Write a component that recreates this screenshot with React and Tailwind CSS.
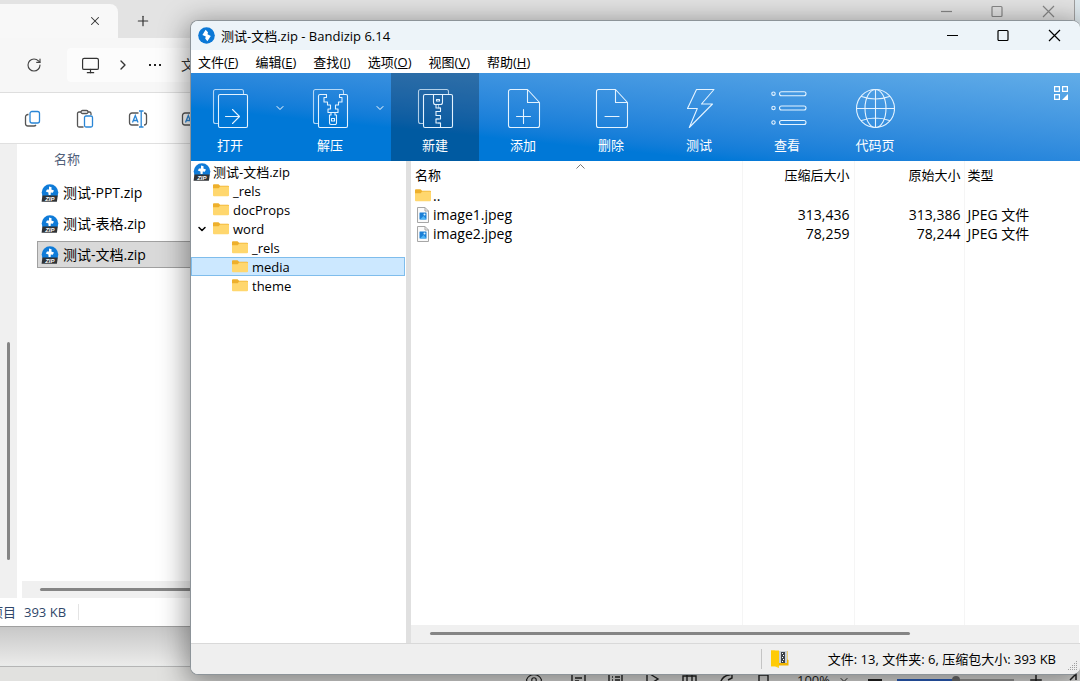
import React from 'react';
import { ChevronDown, ChevronRight, RotateCw, Monitor, Eye, X, Plus } from 'lucide-react';

const menus = [
    { label: '文件', key: 'F' },
    { label: '编辑', key: 'E' },
    { label: '查找', key: 'I' },
    { label: '选项', key: 'O' },
    { label: '视图', key: 'V' },
    { label: '帮助', key: 'H' },
];

const tree = [
    { name: '_rels', pad: 'pl-[21px]' },
    { name: 'docProps', pad: 'pl-[21px]' },
    { name: 'word', pad: 'pl-1', open: true },
    { name: '_rels', pad: 'pl-10' },
    { name: 'media', pad: 'pl-10', selected: true },
    { name: 'theme', pad: 'pl-10' },
];

const images = [
    { name: 'image1.jpeg', packed: '313,436', size: '313,386', type: 'JPEG 文件' },
    { name: 'image2.jpeg', packed: '78,259', size: '78,244', type: 'JPEG 文件' },
];

const archives = ['测试-PPT.zip', '测试-表格.zip', '测试-文档.zip'];

function ZipIcon() {
    return (
        <svg viewBox="0 0 18 18" className="w-[18px] h-[18px] shrink-0">
            <circle cx="9" cy="8.5" r="8.3" fill="#0f7bd8" />
            <path d="M8 2.400 10.600 3.200 10.400 5.400 13 6.600 11.800 8.800 9.800 8.400 9.600 11H7.600L7.400 8.600 4.800 7.600 6 5.400 8 5.600Z" fill="#fff" />
            <path d="M1.400 11.500h15.400l-.9 6.200H.6Z" fill="#2f3337" />
            <text x="8.8" y="16.6" textAnchor="middle" fontSize="6" fontWeight="700" fontStyle="italic" fill="#fff" fontFamily="Liberation Sans, sans-serif">ZIP</text>
        </svg>
    );
}

function FolderIcon() {
    return (
        <svg viewBox="0 0 16 13" className="w-4 h-[13px] shrink-0">
            <path d="M0 1.2Q0 .3.9.3h4.6l1.6 1.5h8q.9 0 .9.9V5H0Z" fill="#eeb02c" />
            <path d="M0 4.2h5.6L7.2 2.400h8q.8 0 .8.8v8.100q0 1-1 1H1q-1 0-1-1Z" fill="#ffd76e" />
        </svg>
    );
}

function JpegIcon() {
    return (
        <svg viewBox="0 0 14 18" className="w-3.5 h-[18px] shrink-0" fill="none">
            <path d="M1.5 1.5h7.5l3.5 3.5v11.5h-11Z" fill="#fafafa" stroke="#a6a6a6" />
            <path d="M9 1.5V5h3.5" stroke="#a6a6a6" />
            <rect x="3.500" y="6.500" width="7" height="7" rx=".5" fill="#1b7fd6" />
            <path d="m4 13.500 3.500-3.500 3 3.500Z" fill="#4db4f5" />
            <circle cx="8.500" cy="8.500" r="1" fill="#d6f3ff" />
        </svg>
    );
}

function ToolIcon({ children }) {
    return (
        <svg viewBox="0 0 40 42" className="w-10 h-[42px] shrink-0" fill="none" stroke="#e4f3ff" strokeWidth="1.1" strokeLinejoin="round" strokeLinecap="round">
            {children}
        </svg>
    );
}

const backSheet = 'M8.5 35.500H5.500a2 2 0 0 1-2-2v-30a2 2 0 0 1 2-2h26a2 2 0 0 1 2 2v3';
const page = 'M24.500 1.500h-17a2 2 0 0 0-2 2v34a2 2 0 0 0 2 2h27a2 2 0 0 0 2-2v-23Zv13h12';

const icons = {
    open: (
        <ToolIcon>
            <path d={backSheet} opacity=".75" />
            <rect x="8.5" y="6.5" width="29" height="33" rx="1.5" />
            <path d="M15.5 28.500h14M22.500 21.500l7 7-7 7" />
        </ToolIcon>
    ),
    extract: (
        <ToolIcon>
            <path d={backSheet} opacity=".75" />
            <path d="M16.500 6.500H10a1.500 1.500 0 0 0-1.500 1.500v30a1.500 1.500 0 0 0 1.500 1.500h26a1.500 1.500 0 0 0 1.500-1.500V8a1.500 1.500 0 0 0-1.500-1.500h-6.500" />
            <path d="M16.500 6.500v3h-2.500v4.500h3.500v3h3v4h-2.500v3.500h3.500M29.500 6.500v3h2.500v4.500h-3.500v3h-3v4h2.500v3.500h-3.500" />
            <path d="M19.500 27h1.500v-2.500h4V27h1.500v8a1.500 1.500 0 0 1-1.500 1.500h-4a1.500 1.500 0 0 1-1.500-1.500Z" />
            <rect x="21.500" y="30.500" width="3" height="2.500" />
        </ToolIcon>
    ),
    create: (
        <ToolIcon>
            <path d={backSheet} opacity=".75" />
            <rect x="8.5" y="6.5" width="29" height="33" rx="1.5" />
            <path d="M18.500 6.500v8a2 2 0 0 0 2 2h5a2 2 0 0 0 2-2v-8" />
            <rect x="21.500" y="11.500" width="3" height="1.500" />
            <path d="M21 16.500v3.500h4.500v3.500h-4.500v4h4.500v3.500h-4.500v4h4.500v4.500" />
            <path d="M25.500 20h-2v-3.500M21 23.500h2.500M25.500 27.500h-2M21 31h2.500M25.500 35h-2" opacity=".6" />
        </ToolIcon>
    ),
    add: (
        <ToolIcon>
            <path d={page} />
            <path d="M13.500 28.500h14M20.500 21.500v14" />
        </ToolIcon>
    ),
    remove: (
        <ToolIcon>
            <path d={page} />
            <path d="M14 28.500h14" />
        </ToolIcon>
    ),
    test: (
        <ToolIcon>
            <path d="M17.500 1.500H35L22.500 16h11L10.300 39.500l8-19H8.500Z" />
        </ToolIcon>
    ),
    view: (
        <ToolIcon>
            {[5.7, 20, 34.5].map((y) => (
                <g key={y}>
                    <circle cx="6.500" cy={y} r="1.7" />
                    <rect x="12.500" y={y - 2} width="26.500" height="4" rx="2" />
                </g>
            ))}
        </ToolIcon>
    ),
    codepage: (
        <ToolIcon>
            <circle cx="20.500" cy="20.500" r="19" />
            <ellipse cx="20.500" cy="20.500" rx="10.500" ry="19" />
            <path d="M20.500 1.500v38M1.500 20.500h38M6.500 8.500q14 5 28 0M6.500 32.500q14-5 28 0" />
        </ToolIcon>
    ),
};

const tools = [
    { label: '打开', icon: icons.open, menu: true },
    { label: '解压', icon: icons.extract, menu: true },
    { label: '新建', icon: icons.create, active: true },
    { label: '添加', icon: icons.add },
    { label: '删除', icon: icons.remove },
    { label: '测试', icon: icons.test },
    { label: '查看', icon: icons.view },
    { label: '代码页', icon: icons.codepage },
];

function WindowControls({ className }) {
    const glyphs = [
        { label: '最小化', d: 'M1 6.500h11' },
        { label: '最大化', d: 'M2 1.500h8a1 1 0 0 1 1 1v8a1 1 0 0 1-1 1H2a1 1 0 0 1-1-1v-8a1 1 0 0 1 1-1Z' },
        { label: '关闭', d: 'm1 1 11 11M12 1 1 12' },
    ];
    return (
        <div className={`ml-auto flex ${className}`}>
            {glyphs.map((g) => (
                <button key={g.label} aria-label={g.label} className="w-[51px] flex items-center justify-center">
                    <svg viewBox="0 0 13 13" className="w-[13px] h-[13px]" fill="none" stroke="currentColor" strokeWidth="1.2">
                        <path d={g.d} />
                    </svg>
                </button>
            ))}
        </div>
    );
}

function RenameIcon() {
    return (
        <svg viewBox="0 0 20 20" className="w-5 h-5" fill="none" stroke="#555" strokeWidth="1.3">
            <path d="M10.500 4H4a2.500 2.500 0 0 0-2.500 2.500v7A2.500 2.500 0 0 0 4 16h6.500M16 4a2.500 2.500 0 0 1 2.500 2.500v7A2.500 2.500 0 0 1 16 16" />
            <path d="M11 2h4.500M11 18h4.500M13.200 2v16M4.500 13.500 7.300 6.500l2.700 7M5.500 11.500h3.700" stroke="#2a86d6" />
        </svg>
    );
}

function Explorer() {
    return (
        <section className="absolute left-0 right-[5px] top-0 bottom-[54px] flex flex-col bg-white border-r border-b border-[#a0a0a0] rounded-br-lg overflow-hidden">
            <div className="h-[38px] shrink-0 flex bg-[#e3e3e3]">
                <div className="w-[118px] mt-1 rounded-tr-lg bg-[#f8f8f8] flex items-center justify-end pr-4">
                    <button aria-label="关闭标签页"><X className="w-3.5 h-3.5 text-[#333]" strokeWidth={1.8} /></button>
                </div>
                <button aria-label="新标签页" className="w-[50px] mt-1 flex items-center justify-center">
                    <Plus className="w-4 h-4 text-[#333]" strokeWidth={1.8} />
                </button>
                <WindowControls className="h-[22px] text-[#888]" />
            </div>

            <div className="h-[55px] shrink-0 flex items-center bg-[#f7f7f7] border-b border-[#dedede]">
                <button aria-label="刷新" className="w-[67px] flex justify-center">
                    <RotateCw className="w-4 h-4 text-[#444]" strokeWidth={1.7} />
                </button>
                <div className="flex-1 h-[34px] flex items-center bg-[#fcfcfc] text-[#333] rounded">
                    <span className="w-[46px] flex justify-center"><Monitor className="w-[19px] h-[19px]" strokeWidth={1.5} /></span>
                    <span className="w-5 flex justify-center"><ChevronRight className="w-4 h-4" strokeWidth={2} /></span>
                    <button aria-label="更多" className="w-11 flex justify-center gap-[3px]">
                        <i className="w-0.5 h-0.5 bg-[#222]" />
                        <i className="w-0.5 h-0.5 bg-[#222]" />
                        <i className="w-0.5 h-0.5 bg-[#222]" />
                    </button>
                    <span className="ml-1 text-sm">文</span>
                </div>
            </div>

            <div className="h-[51px] pt-0.5 shrink-0 flex items-center gap-[33px] pl-[22px] border-b border-[#e0e0e0]">
                <button aria-label="复制">
                    <svg viewBox="0 0 20 20" className="w-5 h-5" fill="none" stroke="#555" strokeWidth="1.3">
                        <path d="M6.500 5.500H6a2.500 2.500 0 0 0-2.500 2.500v6.500A2.500 2.500 0 0 0 6 17h6a2.500 2.500 0 0 0 2-1" />
                        <rect x="8" y="2.500" width="9.500" height="11.500" rx="2" stroke="#2a86d6" />
                    </svg>
                </button>
                <button aria-label="粘贴">
                    <svg viewBox="0 0 20 20" className="w-5 h-5" fill="none" stroke="#555" strokeWidth="1.3">
                        <path d="M6 3H4a1.500 1.500 0 0 0-1.500 1.500v12A1.500 1.500 0 0 0 4 18h4.500M13 3h1.500A1.500 1.500 0 0 1 16 4.500V6" />
                        <rect x="6" y="1.500" width="7" height="3" rx="1.500" />
                        <rect x="9.500" y="7" width="8" height="11" rx="1.500" stroke="#2a86d6" />
                    </svg>
                </button>
                <button aria-label="重命名"><RenameIcon /></button>
                <button aria-label="共享"><RenameIcon /></button>
            </div>

            <div className="flex-1 min-h-0 flex">
                <div className="w-[17px] bg-[#f0f0f0] pl-[7px] flex flex-col">
                    <div className="grow-[198]" />
                    <div className="grow-[218] w-[3px] rounded bg-[#858585]" />
                    <div className="grow-[38]" />
                </div>
                <div className="flex-1 ml-[5px] flex flex-col">
                    <div className="pl-8 h-[35px] leading-[30px] text-[#51607a]">名称</div>
                    <ul className="ml-[15px] flex flex-col gap-1 text-sm">
                        {archives.map((name, i) => (
                            <li key={name} className={`h-[27px] pl-[3px] flex items-center gap-1 border ${i === 2 ? 'bg-[#d9d9d9] border-[#a0a0a0]' : 'border-transparent'}`}>
                                <ZipIcon />
                                <span>{name}</span>
                            </li>
                        ))}
                    </ul>
                    <div className="mt-auto h-[17px] pl-[18px] flex items-center bg-[#f0f0f0]">
                        <div className="w-4/5 h-[3px] rounded bg-[#858585]" />
                    </div>
                </div>
            </div>

            <div className="h-7 shrink-0 flex items-center gap-2 text-[#2f4669]">
                <span className="w-4 flex justify-end whitespace-nowrap">项目</span>
                <span>393 KB</span>
                <span className="w-px h-4 ml-1 bg-[#e4e4e4]" />
            </div>
        </section>
    );
}

function Toolbar() {
    return (
        <div className="h-[88px] shrink-0 flex text-white bg-linear-to-tr from-[#0078d7] from-30% to-[#62ade8]">
            {tools.map((t) => (
                <React.Fragment key={t.label}>
                    <button className={`${t.menu ? 'w-[78px]' : 'w-[88px]'} ${t.active ? 'bg-black/25' : ''} pt-[15px] flex flex-col items-center gap-[5px]`}>
                        {t.icon}
                        <span className="leading-5">{t.label}</span>
                    </button>
                    {t.menu && (
                        <button aria-label={`${t.label}选项`} className="w-[22px] h-[70px] flex items-center justify-center">
                            <ChevronDown className="w-3 h-3" strokeWidth={2} />
                        </button>
                    )}
                </React.Fragment>
            ))}
            <button aria-label="布局" className="ml-auto mt-[13px] mr-3 w-3.5 h-3.5">
                <svg viewBox="0 0 14 14" fill="none" stroke="#fff" strokeWidth="1.2">
                    <path d="M.6.6h4.800v4.800H.6ZM8.600.6h4.800v4.800H8.600ZM.6 8.600h4.800v4.800H.6Z" />
                    <path d="M14 8v6H8Z" fill="#fff" stroke="none" />
                </svg>
            </button>
        </div>
    );
}

function FileTable() {
    return (
        <table className="w-full h-full table-fixed border-collapse text-left">
            <colgroup>
                <col />
                <col className="w-[112px]" />
                <col className="w-[110px]" />
                <col className="w-[116px]" />
            </colgroup>
            <thead>
                <tr className="h-[25px]">
                    <th className="relative pt-0.5 font-normal pl-1 border-r border-[#f5f5f5]">
                        名称
                        <svg viewBox="0 0 9 5" className="absolute top-[3px] left-1/2 w-[9px] h-[5px]" fill="none" stroke="#777">
                            <path d="m.5 4.500 4-4 4 4" />
                        </svg>
                    </th>
                    <th className="pt-0.5 font-normal text-right pr-1 border-r border-[#f5f5f5]">压缩后大小</th>
                    <th className="pt-0.5 font-normal text-right pr-[3px] border-r border-[#f5f5f5]">原始大小</th>
                    <th className="pt-0.5 font-normal pl-[3px]">类型</th>
                </tr>
            </thead>
            <tbody className="text-sm">
                <tr className="h-[19px]">
                    <td className="pl-1 border-r border-[#f5f5f5]">
                        <div className="flex items-center gap-0.5"><FolderIcon /><span className="leading-[19px]">..</span></div>
                    </td>
                    <td className="border-r border-[#f5f5f5]" />
                    <td className="border-r border-[#f5f5f5]" />
                    <td />
                </tr>
                {images.map((f) => (
                    <tr key={f.name} className="h-[19px]">
                        <td className="pl-[5px] border-r border-[#f5f5f5]">
                            <div className="flex items-center gap-[3px] leading-[19px]"><JpegIcon /><span>{f.name}</span></div>
                        </td>
                        <td className="text-right pr-1 leading-[19px] border-r border-[#f5f5f5]">{f.packed}</td>
                        <td className="text-right pr-[3px] leading-[19px] border-r border-[#f5f5f5]">{f.size}</td>
                        <td className="pl-[3px] leading-[19px]">{f.type}</td>
                    </tr>
                ))}
                <tr>
                    <td className="border-r border-[#f5f5f5]" />
                    <td className="border-r border-[#f5f5f5]" />
                    <td className="border-r border-[#f5f5f5]" />
                    <td />
                </tr>
            </tbody>
        </table>
    );
}

function Bandizip() {
    return (
        <section className="absolute left-[190px] right-0 top-5 bottom-1.5 flex flex-col bg-white border-l border-t border-b border-[#8d9499] rounded-lg overflow-hidden shadow-[0_6px_28px_4px_rgba(0,0,0,0.4)]">
            <header className="h-[29px] shrink-0 flex items-center bg-[#edf4f9] pl-[7px]">
                <svg viewBox="0 0 17 17" className="w-[17px] h-[17px]">
                    <circle cx="8.500" cy="8.500" r="8.300" fill="#0b78d6" />
                    <path d="M7.600 2.800 4.400 8 7.800 9.600 7.200 11.600 9.400 14.200 12.800 8.900 9.500 7.300 10 5.200Z" fill="#fff" />
                </svg>
                <h1 className="ml-1.5">测试-文档.zip - Bandizip 6.14</h1>
                <WindowControls className="h-full text-black" />
            </header>

            <nav className="h-[23px] shrink-0 flex items-center gap-[17px] pl-[7px]">
                {menus.map((m) => (
                    <button key={m.key}>{m.label}(<u>{m.key}</u>)</button>
                ))}
            </nav>

            <Toolbar />

            <div className="flex-1 min-h-0 flex">
                <aside className="w-[215px] shrink-0 pt-px">
                    <div className="h-[19px] pl-0.5 flex items-center gap-0.5"><ZipIcon /><span>测试-文档.zip</span></div>
                    <ul>
                        {tree.map((n, i) => (
                            <li key={i} className={`h-[19px] flex items-center border ${n.pad} ${n.selected ? 'bg-[#cce8ff] border-[#7fbdec] mr-px' : 'border-transparent'}`}>
                                {n.open && <ChevronDown className="w-3 h-3 mr-[5px]" strokeWidth={3} />}
                                <FolderIcon />
                                <span className="ml-1">{n.name}</span>
                            </li>
                        ))}
                    </ul>
                </aside>
                <div className="w-[5px] bg-[#e0e0e0]" />
                <main className="flex-1 min-w-0 flex flex-col">
                    <div className="flex-1 min-h-0"><FileTable /></div>
                    <div className="h-[18px] mr-px pl-[19px] pb-0.5 flex items-center bg-[#f0f0f0]">
                        <div className="w-[74%] h-[3px] rounded bg-[#858585]" />
                    </div>
                </main>
            </div>

            <footer className="h-[31px] shrink-0 flex items-center justify-end bg-[#efefef] border-t border-[#d9d9d9]">
                <span className="w-px h-5 bg-[#c4c4c4]" />
                <svg viewBox="0 0 20 20" className="ml-2 w-5 h-5">
                    <path d="M9 2h8.500v8.500L18.500 11v5.500H9Z" fill="#f0b400" />
                    <path d="M8 2h9v12H8Z" fill="#c9d0d6" />
                    <path d="M11 3h4v11h-4Z" fill="#3c4248" />
                    <path d="M12 4h1v1h-1ZM13 6h1v1h-1ZM12 8h1v1h-1ZM13 10h1v1h-1ZM12 12h1v1h-1Z" fill="#fff" />
                    <path d="M1 1.500h3.500L9 4v15l-4-1.500H1Z" fill="#ffd21c" />
                    <path d="M1 1.500h8V17H1Z" fill="#ffcb05" />
                </svg>
                <span className="ml-[38px]">文件: 13, 文件夹: 6, 压缩包大小: 393 KB</span>
                <svg viewBox="0 0 12 12" className="ml-2.5 mr-0.5 mb-0.5 self-end w-3 h-3" fill="#a0a0a0">
                    <path d="M10 1h1v1h-1ZM8 3h1v1h-1ZM10 3h1v1h-1ZM6 5h1v1h-1ZM8 5h1v1h-1ZM10 5h1v1h-1ZM4 7h1v1h-1ZM6 7h1v1h-1ZM8 7h1v1h-1ZM10 7h1v1h-1ZM2 9h1v1h-1ZM4 9h1v1h-1ZM6 9h1v1h-1ZM8 9h1v1h-1ZM10 9h1v1h-1Z" />
                </svg>
            </footer>
        </section>
    );
}

function EditorBar() {
    const views = [
        { label: '页面视图', d: 'M2 2h13v13H2ZM5 6h7M5 9h4' },
        { label: '大纲视图', d: 'M2 2h13v13H2ZM5 5h1M8 5h5M5 8h1M8 8h5' },
        { label: '阅读视图', d: 'M3 1v14M6 2l8 5-8 5' },
        { label: 'Web 视图', d: 'M2 4h13v8H2ZM6 2v12M11 2v12' },
        { label: '护眼模式', d: 'M2 12q2-8 9-9l3-1v4l-4 2' },
        { label: '适合页面', d: 'M4 3h9v12H4Z' },
    ];
    return (
        <footer className="absolute inset-x-0 -bottom-3 h-[27px] pl-[525px] pr-[3px] flex items-center bg-[#e1e1df] border-t border-[#b5b5b5] text-[#222]">
            <button aria-label="显示"><Eye className="w-[18px] h-[18px]" strokeWidth={1.5} /></button>
            <div className="ml-[27px] flex gap-5">
                {views.map((v) => (
                    <button key={v.label} aria-label={v.label}>
                        <svg viewBox="0 0 17 17" className="w-[17px] h-[17px]" fill="none" stroke="currentColor" strokeWidth="1.4"><path d={v.d} /></svg>
                    </button>
                ))}
            </div>
            <span className="ml-auto leading-5">100%</span>
            <ChevronDown className="ml-2 w-3 h-3" />
            <button aria-label="缩小" className="ml-[18px] w-3.5 h-0.5 bg-[#222]" />
            <input
                type="range"
                aria-label="缩放"
                defaultValue="50"
                className="ml-[15px] w-[117px] h-0.5 appearance-none bg-linear-to-r from-[#2b5fc0] from-50% to-[#9a9a9a] to-50% [&::-webkit-slider-thumb]:appearance-none [&::-webkit-slider-thumb]:w-2 [&::-webkit-slider-thumb]:h-2 [&::-webkit-slider-thumb]:rounded-full [&::-webkit-slider-thumb]:bg-[#707070]"
            />
            <button aria-label="放大" className="ml-[13px]"><Plus className="w-[18px] h-[18px]" strokeWidth={2} /></button>
            <svg viewBox="0 0 18 16" className="ml-3.5 w-[18px] h-4" fill="none" stroke="#222" strokeWidth="1.5"><path d="M11 8l6-6M11 2h6v6M1 2h4" /></svg>
        </footer>
    );
}

export default function App() {
    return (
        <div className="relative h-screen min-h-[400px] overflow-hidden bg-linear-to-b from-[#dfe9ee] from-90% to-[#ebebe9] text-[13px] leading-5 text-black font-['Open_Sans','Noto_Sans_CJK_SC',sans-serif]">
            <div className="absolute inset-x-0 bottom-4 h-10 bg-linear-to-b from-[#c6c6c6] to-[#ebebea]" />
            <EditorBar />
            <Explorer />
            <Bandizip />
        </div>
    );
}
